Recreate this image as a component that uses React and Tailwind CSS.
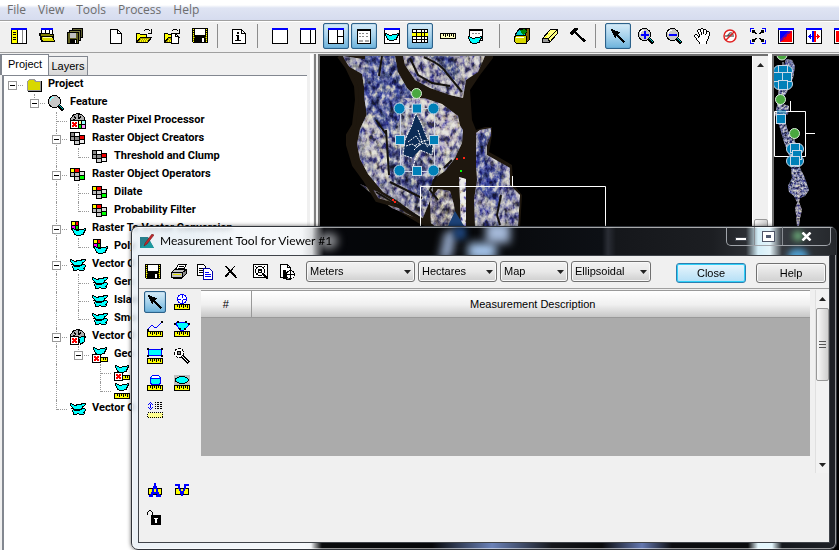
import React from "react";

const PALETTE = {
  k: "#000000", w: "#ffffff", y: "#ffff00", b: "#0000ff", c: "#00ffff", g: "#808080",
  l: "#c0c0c0", o: "#808000", r: "#ff0000", n: "#00ff00", t: "#008080", d: "#d8d800",
};

/* Bitmap drawing: one character per pixel, drawn as horizontal runs. */
function PixGroup({ rows, x: left = 0, y: top = 0 }) {
  const runs = [];
  rows.forEach((row, y) => {
    let x = 0;
    while (x < row.length) {
      const ch = row[x];
      let end = x + 1;
      while (end < row.length && row[end] === ch) end++;
      if (PALETTE[ch]) runs.push(<rect key={y + "-" + x} x={left + x} y={top + y} width={end - x} height="1" fill={PALETTE[ch]} />);
      x = end;
    }
  });
  return <g>{runs}</g>;
}

function Ico({ children, smooth }) {
  return (
    <svg width="16" height="16" viewBox="0 0 16 16" shapeRendering={smooth ? "auto" : "crispEdges"} fill="none" className="block shrink-0 overflow-visible" aria-hidden="true">
      {children}
    </svg>
  );
}

const Pix = ({ rows }) => <Ico><PixGroup rows={rows} /></Ico>;

const Win = ({ children }) => (
  <Ico>
    <rect x="0.5" y="0.5" width="15" height="15" fill="#fff" stroke="#000" />
    {children}
    <rect width="16" height="2" fill="#00f" />
  </Ico>
);

const Arrow = () => (
  <Pix rows={[
    "................", ".kk.............", ".kkkk...........", "..kkkkkk........", "..kkkkkkkk......",
    "...kkkkkk.......", "...kkkkk........", "....kkkkk.......", "....kk.kkk......", ".....k..kkk.....",
    ".........kkk....", "..........kkk...", "...........kkk..", "............kkk.", ".............k..",
  ]} />
);

const Floppy = () => (
  <Pix rows={[
    "kkkkkkkkkkkkkkkk", "kykwwwwwwwwwwkyk", "kkkwwwwwwwwwwkkk", "kykwwwwwwwwwwkyk", "kkkwwwwwwwwwwkkk",
    "kykwwwwwwwwwwkyk", "kokwwwwwwwwwwkok", "kykkkkkkkkkkkkyk", "kokkkkkkkkkkkkok", "kyokkkkkkkkkkoyk",
    "kokkkkkkkkwwkkok", "kykkkkkkkkwwkkyk", "kokkkkkkkkwwkkok", "kykkkkkkkkwwkkyk", ".kkkkkkkkkkkkkkk",
  ]} />
);

const Lens = ({ sign }) => (
  <Ico>
    <path d="M11 11l4.500 4.500" stroke="#000" strokeWidth="3" />
    <path d="M11 10l4.500 4.500" stroke="#0cc" strokeWidth="1" />
    <circle cx="6.500" cy="6.500" r="6" fill="#c8c8c8" stroke="#000" />
    <path d="M2 6c0-2 2-4 4-4" stroke={sign ? "#fff" : "#8ff"} />
    {sign && <path d={sign === "plus" ? "M3 6h8v2H3zM6 3h2v8H6z" : "M3 6h8v2H3z"} fill="#00f" />}
  </Ico>
);

const Hand = () => (
  <Pix rows={[
    ".......kk.......", "....kkkwwkkk....", "...kwwkwwkwwk...", "...kwwkwwkwwkkk.", "....kwwkwkwwkwwk",
    "....kwwkwkwwkwwk", ".kk..kwkwwwkwwwk", "kwwk.kwwwwwwwwwk", "kwwwkkwwwwwwwwk.", ".kwwkwwwwwwwwwk.",
    "..kwwwwwwwwwwwk.", "..kwwwwwwwwwwk..", "...kwwwwwwwwwk..", "....kwwwwwwwk...", ".....kwwwwwwk...", ".....kwwwwwwk...",
  ]} />
);

const FolderOpen = ({ doc }) => (
  <Ico>
    <path d="M7.500 3.500l2-2h3l2 2M15.500 1v4h-4" stroke="#000" />
    <path d="M.5 13.500v-8h3l1 1h6v3" fill="#ff0" stroke="#000" />
    <path d="M.5 14.500l4-5h11l-4 5z" fill="#a8a000" stroke="#000" />
    <path d="M5 11h8M4 12h8M4 13h7" stroke="#ff0" strokeDasharray="1 1" />
    {doc && <path d="M7.500 5.500h4l3 3v7h-7z" fill="#fff" stroke="#000" />}
    {doc && <path d="M11.500 5.500v3h3" stroke="#000" />}
  </Ico>
);

const Ruler = ({ y = 10, faded }) => (
  <>
    <rect x="0.500" y={y + 0.5} width="15" height="5" fill={faded ? "#ffff90" : "#ff0"} stroke="#000" strokeDasharray={faded ? "1 1" : undefined} />
    {!faded && <path d={`M3.500 ${y + 1}v2M5.500 ${y + 1}v3M7.500 ${y + 1}v2M9.500 ${y + 1}v3M11.500 ${y + 1}v2M13.500 ${y + 1}v3`} stroke="#000" />}
  </>
);

const Blob = ({ x = 0, y = 0 }) => (
  <PixGroup x={x} y={y} rows={["kk..........kk", "kckk...kkkkkck", "kccckkkccccckk", ".kcccccccccck.", ".kccccccccckk.", "..kcccccccck..", "..kkccccckkk..", "....kkkkk....."]} />
);

const RedX = () => (
  <PixGroup y={7} rows={["kkkkkkkkk", "kwwwwwwwk", "kwrrwrrwk", "kwrrrrrwk", "kwwrrrwwk", "kwrrrrrwk", "kwrrwrrwk", "kwwwwwwwk", "kkkkkkkkk"]} />
);

const Blocks = ({ colors }) => (
  <Ico>
    {[[1, 2], [1, 6], [5, 2], [5, 6], [5, 10], [10, 5], [10, 9]].map(([x, y], i) => (
      <rect key={i} x={x - 0.5} y={y - 0.5} width="5" height="4" fill={colors[i]} stroke="#000" />
    ))}
  </Ico>
);

const GREY_BLOCKS = ["#888", "#999", "#fff", "#888", "#ccc", "#e00", "#eee"];
const COLOR_BLOCKS = ["#ff0", "#bbb", "#f00", "#bbb", "#ccc", "#ddd", "#0f0"];

const Brain = ({ vector }) => (
  <Ico>
    <path d="M.5 8.500v-3l3-3.500 4-1.500 4 1 3 3 1 4z" fill="#b0b0b0" stroke="#000" />
    <path d="M4 3l2 3M8 1v5M11 3l-2 3M3 7l2-1" stroke="#000" />
    {vector ? <path d="M8.500 8.500l6-1v5l-4 3z" fill="#0ff" stroke="#000" /> : (
      <>
        <rect x="8.500" y="7.500" width="4" height="4" fill="#ff9" stroke="#000" />
        <rect x="11.500" y="7.500" width="4" height="4" fill="#9ff" stroke="#000" />
        <rect x="8.500" y="11.500" width="4" height="4" fill="#0f0" stroke="#000" />
        <rect x="11.500" y="11.500" width="4" height="4" fill="#f9f" stroke="#000" />
      </>
    )}
    <RedX />
  </Ico>
);

const ICONS = {
  panes: <Win><rect x="1" y="1" width="5" height="14" fill="#ff0" /><path d="M2 4.500h3M2 6.500h3M2 9.500h3M2 11.500h3" stroke="#000" /><path d="M6.500 2v13" stroke="#000" /><path d="M11.500 2v13" stroke="#888" /></Win>,
  notebook: <Ico><rect x="2.500" y="0.500" width="11" height="7" fill="#fff" stroke="#000" /><rect x="2" width="12" height="2" fill="#00f" /><path d="M6.500 2v4M10.500 2v4" stroke="#000" /><path d="M.5 5.500h10l1 1h3v7h-12z" fill="#808000" stroke="#000" /><path d="M.5 5.500l2 3h11l2 5h-12z" fill="#d8d800" stroke="#000" /><path d="M4 9.500h9" stroke="#ffffa0" /></Ico>,
  floppies: <Ico><path d="M5.500.5h10v9h-3v-6h-7z" fill="#606030" stroke="#000" /><path d="M2.500 2.500h11v10h-11z" fill="#808040" stroke="#000" /><path d="M.5 4.500h11v11h-11z" fill="#606020" stroke="#000" /><rect x="3" y="5" width="6" height="5" fill="#c0c0c0" /><rect x="3" y="11" width="7" height="4" fill="#000" /><rect x="8" y="12" width="1" height="3" fill="#fff" /></Ico>,
  doc: <Ico><path d="M2.500 1.500h7l4 4v10h-11z" fill="#fff" stroke="#000" /><path d="M9.500 1.500v4h4" stroke="#000" /></Ico>,
  open: <FolderOpen />,
  openDoc: <FolderOpen doc />,
  floppy: <Floppy />,
  info: <Ico><path d="M1.500 1.500h9l4 4v10h-13z" fill="#fff" stroke="#000" /><path d="M10.500 1.500v4h4" stroke="#000" /><path d="M6 4h2v2H6zM5 7h3v5h2v1H4v-1h2V8H5z" fill="#000" /></Ico>,
  win1: <Win />,
  win2: <Win><path d="M10.500 2v13" stroke="#000" /></Win>,
  win3: <Win><path d="M9.500 2v13M10 8.500h5" stroke="#000" /></Win>,
  dialog: <Ico><rect x="1.500" y="1.500" width="13" height="14" fill="#fff" stroke="#000" /><path d="M1 2h14" stroke="#000" strokeWidth="2" /><path d="M3 5.500h6M3 8.500h6M10 5.500h2M10 8.500h3" stroke="#888" strokeDasharray="2 1" /><path d="M3 12h4v2H3zM9 12h4v2H9z" fill="#aaa" /></Ico>,
  vectorWin: <Win><Blob x={1} y={5} /></Win>,
  grid: <Ico><rect x="0.500" y="1.500" width="15" height="13" fill="#fff" stroke="#000" /><rect x="0" y="5" width="16" height="3" fill="#ff0" /><path d="M0 4.500h16M0 8.500h16M0 11.500h16M4.500 1v14M9.500 1v14M12.500 1v14" stroke="#000" /></Ico>,
  ruler: <Ico><rect x="0.500" y="5.500" width="15" height="5" fill="#ffffc0" stroke="#000" /><path d="M3.500 6v2M5.500 6v3M7.500 6v2M9.500 6v3M11.500 6v2M13.500 6v3" stroke="#000" /></Ico>,
  vectorDlg: <Ico><rect x="1.500" y="1.500" width="13" height="11" fill="#fff" stroke="#000" /><path d="M1 2h14" stroke="#000" strokeWidth="2" /><path d="M4 5.500h8" stroke="#888" strokeDasharray="2 1" /><Blob y={8} /></Ico>,
  catalog: <Ico><path d="M4.500.5h11v11l-4 4" fill="#806000" stroke="#000" /><path d="M1 7l4-6h8l-2 7z" fill="#0cc" stroke="#000" /><path d="M6 2l5-1 2 3-4 3z" fill="#080" /><path d="M.5 8.500l2-1h9l1 1v7h-10l-2-2z" fill="#d8d800" stroke="#000" /><path d="M2 9.500h8" stroke="#fff" /></Ico>,
  eraser: <Ico><path d="M.5 10.500l8-9h7v4l-8 9h-7z" fill="#ffff80" stroke="#000" /><path d="M.5 10.500h6l1 4h-7z" fill="#999" stroke="#000" /><path d="M6.500 10.500l9-9" stroke="#000" /><path d="M3 10l7-7" stroke="#ff0" strokeDasharray="1 1" /></Ico>,
  hammer: <Pix rows={["....kkkk........", "...kkkkk........", "..kkkkk.........", ".kkkkk..........", "kkkkkkk.........", "kkkk.kkk........", ".kk...kkk.......", ".......kkk......", "........kkk.....", ".........kkk....", "..........kkkk..", "...........kkkk.", "............kkkk", ".............kk."]} />,
  arrow: <Arrow />,
  zoomIn: <Lens sign="plus" />,
  zoomOut: <Lens sign="minus" />,
  hand: <Hand />,
  noRotate: <Ico smooth><circle cx="8" cy="8" r="6" fill="#fff" stroke="#e02020" strokeWidth="1.500" /><path d="M3 8h9M6 8c0-4 5-4 5-1M8 6v2" stroke="#222" /><path d="M4 12l8-8" stroke="#e02020" strokeWidth="1.500" /></Ico>,
  fit: <Ico><path d="M.5 4V.5H4M12 .5h3.500V4M15.500 12v3.500H12M4 15.500H.5V12" stroke="#00f" /><PixGroup x={2} y={2} rows={["kkk......kkk", "kkk......kkk", "kkkk....kkkk", "...kk..kk...", "............", "............", "............", "............", "...kk..kk...", "kkkk....kkkk", "kkk......kkk", "kkk......kkk"]} /></Ico>,
  blend: <Win><rect x="2" y="3" width="12" height="11" fill="#f00" /><path d="M2 3h12L2 14z" fill="#50b" /><path d="M2 3h8l-8 8z" fill="#00f" /><path d="M4 13l9-9" stroke="#b04" strokeWidth="2" strokeDasharray="1 1" /></Win>,
  swipe: <Win><path d="M6 3h2v11H6z" fill="#00f" /><path d="M8 3h2v11H8z" fill="#f00" /><path d="M2 8.500h4M4.500 6v5M3.500 7v3" stroke="#00f" /><path d="M10 8.500h4M11.500 6v5M12.500 7v3" stroke="#f00" /></Win>,
  flicker: <Win><rect x="2" y="3" width="12" height="11" fill="#f00" /><path d="M6 4l6 4-6 4z" fill="#fff" /></Win>,
  folder: <Ico><path d="M3 14.500h12.500V4" stroke="#000" strokeWidth="1" /><path d="M1.500 4.500l2-2h5l1 2h5v9h-13z" fill="#d8d800" stroke="#999" /><path d="M2 14h13V5" stroke="#000" /></Ico>,
  feature: <Lens />,
  pixelProc: <Brain />,
  vectorProc: <Brain vector />,
  greyBlocks: <Blocks colors={GREY_BLOCKS} />,
  colorBlocks: <Blocks colors={COLOR_BLOCKS} />,
  rasterVector: <Ico><path d="M1 1h4v4H1z" fill="#ff0" /><path d="M5 1h4v4H5z" fill="#f00" /><path d="M1 5h4v4H1z" fill="#f0f" /><path d="M5 5h4v4H5z" fill="#0d0" /><path d="M1.500 0.500h7v8h-7zM1 4.500h8M5 1v8" stroke="#000" /><Blob x={2} y={7} /></Ico>,
  vectors: <Ico><PixGroup y={2} rows={["kk.........kkkkk", "kckk..kkkkkkccck", "kccckkkccccccck.", ".kcccccccccckk..", "..kccccccccck...", ".kkkccccccckkkk.", "...kkkkkkkkkccck", "..kckkkkkkccccck", "..kccccccccccck.", "...kccccccccckk.", "...kccckkccccck.", "...kkkk..kkkkk.."]} /></Ico>,
  blobX: <Ico><Blob x={1} y={0} /><path d="M9 10.500h6.500v4H9" fill="#ff0" stroke="#000" /><path d="M11.500 11v2M13.500 11v2" stroke="#000" /><RedX /></Ico>,
  blobRuler: <Ico><Blob x={1} y={0} /><Ruler /></Ico>,
  printer: <Ico><path d="M4.500 5.500l3-5h8l-3 5z" fill="#fff" stroke="#000" /><path d="M8 2.500h5M7 4.500h5" stroke="#000" /><path d="M.5 8.500l3-3h11l-2 3z" fill="#c0c0c0" stroke="#000" /><path d="M.5 8.500h11v5h-11z" fill="#c0c0c0" stroke="#000" /><path d="M11.500 13.500l4-4v-4l-4 3z" fill="#888" stroke="#000" /><path d="M2 10.500h8" stroke="#dd0" /><path d="M2 14.500h9" stroke="#000" /></Ico>,
  copy: <Ico><path d="M.5.5h6l2 2v9h-8z" fill="#fff" stroke="#000" /><path d="M2 4.500h4M2 6.500h4M2 8.500h4" stroke="#000" /><path d="M6.500 4.500h6l3 3v8h-9z" fill="#fff" stroke="#00a" /><path d="M8 8.500h4M8 10.500h6M8 12.500h6" stroke="#00f" /></Ico>,
  remove: <Pix rows={["", "", "..kk.......k....", "...kk.....k.....", "....kk...k......", ".....kk.kk......", ".....kkkk.......", "......kkk.......", ".....kkkkk......", "....kk..kkk.....", "...kkk...kkk....", "..kkk.....kkk...", "..kk.......kk...", "............kk.."]} />,
  find: <Ico><rect x="0.500" y="0.500" width="14" height="13" fill="#fff" stroke="#000" /><circle cx="7" cy="7" r="4.500" stroke="#000" /><circle cx="7" cy="7" r="2" stroke="#000" /><path d="M2 2l10 10M12 2L2 12" stroke="#000" strokeDasharray="1 1" /><path d="M10 10l5 5" stroke="#000" strokeWidth="2" /></Ico>,
  annotate: <Ico><path d="M1.500.5h7l3 3v10h-10z" fill="#fff" stroke="#000" /><path d="M8.500.5v3h3" stroke="#000" /><path d="M4 6h3v9H4z" fill="#000" /><path d="M7 8h3v7H7z" fill="#888" stroke="#000" /><circle cx="11.500" cy="10.500" r="4" fill="#fff" stroke="#000" /><path d="M7 10.500h9M11.500 6v10" stroke="#000" /></Ico>,
  point: <Ico><circle cx="8" cy="5" r="4.500" fill="#fff" stroke="#00f" /><path d="M8 0v10M3 5h10" stroke="#00f" strokeDasharray="4 2" /><Ruler /></Ico>,
  line: <Ico><PixGroup rows={["..............kk", "..............kk", ".............b..", "............b...", "....bb.....b....", "...b..b...b.....", "..b....bbb......", ".b..............", "kk..............", "kk.............."]} /><Ruler /></Ico>,
  polygon: <Ico><path d="M2 2l10-1 3 3-5 5H6L2 3z" fill="#0ff" stroke="#00f" /><path d="M0 2h2v2H0zM3 0h2v2H3zM11 0h2v2h-2zM14 2h2v2h-2zM5 7h2v2H5zM10 7h2v2h-2z" fill="#000" /><Ruler /></Ico>,
  rect: <Ico><rect x="1.500" y="1.500" width="13" height="6" fill="#0ff" stroke="#00f" /><path d="M0 0h2v2H0zM14 0h2v2h-2zM0 7h2v2H0zM14 7h2v2h-2z" fill="#000" /><Ruler /></Ico>,
  wand: <Ico><circle cx="5" cy="5" r="4.500" fill="#fff" stroke="#000" strokeDasharray="3 1" /><circle cx="5" cy="5" r="2" fill="#888" stroke="#000" /><path d="M8 8l7 7" stroke="#000" strokeWidth="3" /><path d="M8 8l6 6" stroke="#fff" /></Ico>,
  cylinder: <Ico><path d="M3.500 2.500l2-2h6l2 2v6l-2 1h-6l-2-1z" fill="#0ff" stroke="#00f" /><path d="M5 1h7v2H5z" fill="#fff" /><path d="M4 3.500h9" stroke="#00f" /><Ruler /></Ico>,
  ellipse: <Ico><path d="M0 0h16v10H0z" fill="#c0c0c0" /><ellipse cx="8" cy="5" rx="6.500" ry="3.500" fill="#0ff" stroke="#000" /><Ruler /></Ico>,
  height: <Ico><PixGroup x={1} rows={["..b....k.kk.kk", ".b.b..........", "b.b.b..k.kk.kk", "..b...........", "..b....k.kk.kk", "b.b.b.........", ".b.b...k.kk.kk", "..b..........."]} /><Ruler faded /></Ico>,
  textA: <Ico><path d="M1.500 5.500h13v6h-13z" fill="#ff0" stroke="#000" /><path d="M2 13h4M9 13h5M4 13l4-11 4 11M5 10h6" stroke="#00f" strokeWidth="2" /></Ico>,
  textV: <Ico><path d="M1.500 5.500h13v6h-13z" fill="#ff0" stroke="#000" /><path d="M1 2h5M10 2h5M4 2l4 10 4-10" stroke="#00f" strokeWidth="2" /></Ico>,
  lock: <Ico><path d="M.5 4.500v-2l2-2h1l2 2v2" stroke="#000" /><path d="M4 5h10v10H4z" fill="#000" /><path d="M7 8h4v1H7zM8 8h2v5H8z" fill="#fff" /></Ico>,
};

const TOOLBAR = [
  ["panes", "notebook", "floppies", "space", "doc", "open", "openDoc", "floppy"],
  ["info"],
  ["win1", "win2", "win3*", "dialog*", "vectorWin", "grid*", "ruler", "vectorDlg"],
  ["catalog", "eraser", "hammer"],
  ["arrow*", "zoomIn", "zoomOut", "hand", "noRotate", "fit", "blend", "swipe", "flicker"],
];

const SEPARATORS = ["", "ml-[3px] mr-[7px]", "ml-1 mr-2", "ml-[9px] mr-2", "ml-[3px] mr-2"];

const ACTIVE = "border-[#2c628b] bg-linear-to-b from-[#d5ebf8] via-[#a8d3ec] to-[#6db3dc] rounded-[2px] shadow-[inset_0_0_1px_#2c628b]";

function MainToolbar() {
  return (
    <div role="toolbar" aria-label="Main" className="flex h-8 shrink-0 items-center overflow-hidden border-t border-[#a0a0a0] bg-[#f0f0f0] pb-px pl-[5px] shadow-[inset_0_1px_0_#fff]">
      {TOOLBAR.map((group, gi) => (
        <React.Fragment key={gi}>
          {gi > 0 && <span className={"h-6 w-px shrink-0 bg-[#8c8c8c] " + SEPARATORS[gi]} />}
          {group.map((id) => {
            if (id === "space") return <span key={id} className="w-[13px] shrink-0" />;
            const on = id.endsWith("*");
            const name = on ? id.slice(0, -1) : id;
            return (
              <button key={id} type="button" aria-label={name} className={"mx-px flex h-[26px] w-[26px] shrink-0 items-center justify-center border " + (on ? ACTIVE : "border-transparent")}>
                {ICONS[name]}
              </button>
            );
          })}
        </React.Fragment>
      ))}
    </div>
  );
}

/* guides: " " none, "|" passing line, "t" branch, "L" last branch, "-" root; the flag marks an expander */
const TREE = [
  ["-", true, "folder", "Project"],
  [" L", true, "feature", "Feature"],
  ["  t", false, "pixelProc", "Raster Pixel Processor"],
  ["  t", true, "greyBlocks", "Raster Object Creators"],
  ["  |L", false, "greyBlocks", "Threshold and Clump"],
  ["  t", true, "colorBlocks", "Raster Object Operators"],
  ["  |t", false, "colorBlocks", "Dilate"],
  ["  |L", false, "colorBlocks", "Probability Filter"],
  ["  t", true, "rasterVector", "Raster To Vector Conversion"],
  ["  |L", false, "rasterVector", "Poly"],
  ["  t", true, "vectors", "Vector O"],
  ["  |t", false, "vectors", "Gen"],
  ["  |t", false, "vectors", "Islan"],
  ["  |L", false, "vectors", "Smo"],
  ["  t", true, "vectorProc", "Vector O"],
  ["  |L", true, "blobX", "Geo"],
  ["  | t", false, "blobX", ""],
  ["  | L", false, "blobRuler", ""],
  ["  L", false, "vectors", "Vector O"],
];

function Guide({ kind, box, first }) {
  const vertical = kind === "|" || kind === "t" ? "h-full border-r" : kind === "L" ? "h-[10px] border-r" : "h-full";
  const branch = kind === "t" || kind === "L" || kind === "-";
  return (
    <span className={"relative flex h-full shrink-0 " + (first ? "w-[19px]" : "w-[22px]")}>
      <span className={(first ? "w-[9px]" : "w-3") + " border-dotted border-[#999] " + vertical} />
      <span className={"h-[10px] flex-1 border-dotted border-[#999] " + (branch ? "border-b" : "")} />
      {box && (
        <span className={"absolute top-[5px] flex h-[9px] w-[9px] items-center justify-center border border-[#999] bg-white " + (first ? "left-1" : "left-[7px]")}>
          <span className="h-px w-[5px] bg-black" />
        </span>
      )}
    </span>
  );
}

function ProjectTree() {
  return (
    <ul className="ml-0.5 min-h-0 flex-1 overflow-hidden border-l-2 border-t border-[#828790] bg-white font-['Roboto',Arial,sans-serif]">
      {TREE.map(([guides, box, icon, label], i) => (
        <li key={i} className="flex h-[18px] items-center">
          {guides.split("").map((g, gi) => (
            <Guide key={gi} kind={g} first={gi === 0} box={box && gi === guides.length - 1} />
          ))}
          <span className="flex w-[25px] shrink-0 justify-start pl-[3px]">{ICONS[icon]}</span>
          <span className="mb-0.5 whitespace-nowrap text-[11px] font-bold leading-3 text-black">{label}</span>
        </li>
      ))}
    </ul>
  );
}

function NoiseDefs({ id, freq }) {
  return (
    <filter id={id} x="0" y="0" width="100%" height="100%" colorInterpolationFilters="sRGB">
      <feTurbulence type="fractalNoise" baseFrequency={freq} numOctaves="3" seed="11" result="n" />
      <feColorMatrix in="n" type="matrix" values="1.9 1.1 0 0 -1.0  1.9 1.0 0 0 -0.97  1.3 0.6 0.5 0 -0.68  0 0 0 0 1" result="c" />
      <feComposite in="c" in2="SourceAlpha" operator="in" result="t" />
      <feBlend in="t" in2="SourceGraphic" mode="hard-light" result="h" />
      <feComposite in="h" in2="SourceGraphic" operator="arithmetic" k1="0" k2="0.700" k3="0.250" k4="0" />
    </filter>
  );
}

const Handle = ({ x, y, round }) =>
  round ? <circle cx={x} cy={y} r="5.500" fill="#0080b8" stroke="#c8d8e8" /> : <rect x={x - 4.5} y={y - 4.5} width="9" height="9" fill="#0080b8" stroke="#c8d8e8" />;

function MainImage() {
  return (
    <svg viewBox="320 56 431 171" className="block h-[171px] w-[431px] shrink-0" fill="none" role="img" aria-label="Satellite image">
      <defs><NoiseDefs id="land" freq="0.2 0.14" /></defs>
      <path d="M339 56l8 11 9 19 1 14-3 25-6 10v10l6 20 11 15 12 20 10 3 13 9 20 12 10 4h90l2-33-9-11-1-19-12-7-11-6 3-17v-8h-7l-9 3-4-10-2-30 10-15 13-17V56z" fill="#1e170e" />
      <g filter="url(#land)">
        <path d="M343 56l5 10 14 8 4 25 1 15-7 15-3 15 3 15 8 15 15 18 15 9 20 15 4 4 5-12 6-15-1-13 13-9 10-13 7-15 1-13-8-12-10-7-15-5-12-1-10-7-10-18-3-16z" fill="#9599ae" />
        <path d="M365 56h30l3 16 9 16 11 10-12 6-7 16-8 18-10 2-14-24-3-20z" fill="#5463a0" />
        <path d="M384 150l18-8 20 18 12 14-8 30-24-18-18-16z" fill="#5a6592" />
        <path d="M369 112l8 14 9 12 3 44-14-13-13-25 1-20z" fill="#b8b8c0" />
        <path d="M403 56l2 9 10 15 15 8 20 7 13 3 3-18 12-8 7-16z" fill="#a9a9b8" />
        <path d="M430 56h20l10 14-3 12-18-12z" fill="#5f6c98" />
        <path d="M476 133l4-3 11-2v7l-4 10v10l23 13v17l10 10-2 31h-43l-1-26 3-20-1-20z" fill="#9498b4" />
        <path d="M478 134l11-4-5 20 2 12 16 12-4 34-18-18-4-24z" fill="#4e5da2" />
        <path d="M430 200l8-11 12 2 4 14 3 21h-26z" fill="#888690" />
        <path d="M459 177l7 2v47h-5l-1-26z" fill="#eeeef0" />
        <path d="M360 184l18 8 20 12 18 14-24-10-20-14z" fill="#807c80" />
        <path d="M404 98h20l18 6 16 12 3 14-8 20-12 10-4-20-10-20-8-8z" fill="#c4c0c6" />
      </g>
      <path d="M339 56l8 11 9 19 1 14-3 25-6 10v10l6 20 11 15 12 20 22 6 34 21" stroke="#1e170e" strokeWidth="4" />
      <path d="M410 58l8 17 14 8 18 3M424 57c10 5 18 8 24 18l14 17M386 130l3 45M376 120l10 14M390 182l32 16M501 195l-4 20 3 10M382 56l-3 20M440 168l-10 22 8 10M452 160l-8 8M376 192l20 12 24 14" stroke="#15120e" strokeWidth="2" />
      <path d="M448 226l7-15 9 15z" fill="#1c4278" />
      <path d="M416 113l6 12 5 13 6 7-1 10-12-5-8 8-9-3 2-15 7-15z" fill="#0c2c56" />
      <path d="M416 113l6 12 5 13 6 7-1 10-12-5-5 9-2 9 M412 158l-9-3 2-15 7-15 4-12M408 142l8-6 4 6 8-2M406 146l6-2 5 3 6-4 8 3M418 130l4 12-8 4M424 140l4 8M414 150l6-6" stroke="#fff" strokeDasharray="2 1" />
      <path d="M456 158h2v2h-2zM463 157h2v2h-2zM392 199h2v2h-2zM394 201h2v2h-2z" fill="#f21" />
      <path d="M460 170h2v2h-2z" fill="#0f0" />
      <rect x="400.500" y="108.500" width="34" height="63" stroke="#cdd3e4" />
      <path d="M417 95v14" stroke="#cdd3e4" />
      <Handle round x={399.5} y={108.5} /><Handle round x={433.5} y={108.5} /><Handle round x={399.5} y={170.5} /><Handle round x={433.5} y={170.5} />
      <Handle x={417} y={108.5} /><Handle x={400} y={140} /><Handle x={434} y={140} /><Handle x={417} y={171} />
      <circle cx="416.500" cy="93.500" r="5" fill="#4aa840" stroke="#e0f0e0" />
      <path d="M420.500 227v-40.500h185V227M512.500 176v10" stroke="#fff" />
    </svg>
  );
}

function Overview() {
  return (
    <svg viewBox="774 56 65 171" className="block h-[171px] w-[65px] shrink-0" fill="none" role="img" aria-label="Overview image">
      <defs><NoiseDefs id="mini" freq="0.4" /></defs>
      <g filter="url(#mini)">
        <path d="M786 59l6 1 3 6-2 12-6 14-5 8 1 4 6 2-1 8-4 2 3 12 4 10 6 6 1 8-2 8 4 8 4 8 3 8 2 6-4 6-5 2-3 4-3-6-5-4-1-6 4-8-2-20-6-16-4-14-5-14 2-8 2-20z" fill="#7d86ac" />
        <path d="M800 184l1 10-2 8 3 8-2 8-1 8h-2l-1-12-1-6 3-7-1-8 1-8z" fill="#a0a0b0" />
      </g>
      <path d="M783 62v12M780 99v14M794 133v14" stroke="#cdd3e4" />
      <Handle round x={779} y={71} /><Handle round x={787} y={71} /><Handle round x={779} y={84} /><Handle round x={787} y={84} />
      <Handle x={783} y={70} /><Handle x={778} y={77} /><Handle x={787} y={77} /><Handle x={783} y={85} />
      <path d="M774.500 111.500h31v45h-31zM790.500 101v10M806 133.500h9" stroke="#fff" />
      <Handle x={781} y={119} /><path d="M777 111h9M777 113h9" stroke="#0080b8" />
      <Handle round x={792} y={149} /><Handle round x={798} y={149} /><Handle round x={792} y={161} /><Handle round x={798} y={161} />
      <Handle x={795} y={148} /><Handle x={797} y={155} /><Handle x={795} y={161} />
      <circle cx="782" cy="55" r="5" fill="#4aa840" stroke="#e0f0e0" />
      <circle cx="780.500" cy="99.500" r="5" fill="#4aa840" stroke="#e0f0e0" />
      <circle cx="794.500" cy="133.500" r="5" fill="#4aa840" stroke="#e0f0e0" />
    </svg>
  );
}

const Tri = ({ up }) => (
  <svg width="7" height="4" viewBox="0 0 7 4" className="block" aria-hidden="true"><path d={up ? "M0 4l3.500-4L7 4z" : "M0 0l3.500 4L7 0z"} fill="#222" /></svg>
);

const DIALOG_FONT = "font-['Liberation_Sans',Arial,sans-serif] text-[11px]";

function Combo({ label, value, width }) {
  return (
    <span className={"relative flex h-[21px] shrink-0 " + width}>
      <select aria-label={label} className={"h-full w-full appearance-none rounded-[3px] border border-[#707070] bg-linear-to-b from-[#f2f2f2] via-[#e8e8e8] to-[#cfcfcf] pl-[3px] text-black shadow-[inset_0_0_0_1px_#f8f8f8] " + DIALOG_FONT} defaultValue={value}>
        <option>{value}</option>
      </select>
      <span className="pointer-events-none absolute right-1 top-[9px]"><Tri /></span>
    </span>
  );
}

const TOOLS = ["arrow", "point", "line", "polygon", "rect", "wand", "cylinder", "ellipse", "height"];

function ToolButton({ id, on }) {
  return (
    <button type="button" aria-label={id} className={"flex h-[22px] w-[22px] items-center justify-center border " + (on ? ACTIVE : "border-transparent")}>
      {ICONS[id]}
    </button>
  );
}

function MeasurementDialog() {
  return (
    <section role="dialog" aria-label="Measurement Tool" className="absolute bottom-0 left-[131px] right-[2px] top-[226px] flex flex-col overflow-hidden rounded-[7px] border border-[#30343a] bg-[linear-gradient(90deg,#e6edf4c8_0,#f3f6f9c8_179px,#0a0b0d_190px,#060709_300px,#6b82b8_360px,#16181c_420px,#090a0c_470px,#6478b0_510px,#0c0d10_540px,#0a0b0d_616px,#e4f6fc_626px,#e4f6fc_640px,#14171c_650px,#1e2126_100%)] px-[6px] pb-[6px] shadow-[inset_0_0_0_1px_#ffffff90,0_0_4px_#0009] backdrop-blur-[2px]">
      <header className="relative -mx-[6px] flex h-[28px] shrink-0 overflow-hidden bg-[linear-gradient(90deg,#eef2f630_0,#d9e8f230_60px,#fbfcfd60_110px,#f4f6f8_170px,#d8dadc_180px,#05060a_192px,#050608_300px,#0d1015_470px,#2a2d35_476px,#15171b_484px,#1c1e22_580px,#2b2e33_614px,#d4eef8_626px,#e4f4fa_638px,#35393f_650px,#25282c_100%)] pl-2 shadow-[inset_0_1px_0_#ffffffa0]">
        <span className="absolute left-[310px] top-1 h-7 w-3 -skew-x-12 bg-[#93a6c6] blur-[4px]" />
        <span className="absolute left-[322px] top-0 h-3 w-3 bg-[#1c4278] blur-[3px]" />
        <span className="absolute left-[336px] top-4 h-4 w-7 bg-[#a9c9f0] blur-[5px]" />
        <span className="absolute left-[354px] top-[-4px] h-5 w-6 bg-[#a4b8d8] blur-[4px]" />
        <span className="absolute left-[661px] top-1 h-2.5 w-2.5 rounded-full bg-[#6fb27d] blur-[3px]" />
        <span className="absolute left-[656px] top-[22px] h-4 w-5 rounded-full bg-[#4f9fd0] blur-[3px]" />
        <span className="absolute left-[186px] top-1.5 h-4 w-5 rounded-full bg-[#8a8c90] blur-[4px]" />
        <span className="relative mt-[7px] h-4 w-[14px]">
          <svg width="14" height="15" viewBox="0 0 14 15" aria-hidden="true"><path d="M0 3h8l6 11H0z" fill="#2a7f8c" /><path d="M0 14L8 4l6 10z" fill="#1c9aa0" /><path d="M4 12l1-3 7-9 2 1-7 9z" fill="#c0282c" stroke="#601010" strokeWidth="0.500" /></svg>
        </span>
        <h1 className="relative ml-1.5 mt-[7px] h-[14px] whitespace-nowrap font-['Lato','Segoe_UI',sans-serif] text-[12px] leading-[14px] text-black">Measurement Tool for Viewer #1</h1>
        <div className="relative ml-auto mr-[5px] flex h-[19px] rounded-b-[5px] border border-t-0 border-[#a0a4aa] text-white">
          <button type="button" aria-label="Minimize" className="flex w-[28px] items-center justify-center border-r border-[#888c92]"><span className="mt-1.5 h-1 w-3 border border-[#40444c] bg-white" /></button>
          <button type="button" aria-label="Maximize" className="flex w-[28px] items-center justify-center border-r border-[#888c92]"><span className="h-[9px] w-[11px] border-[3px] border-white bg-[#505a70] outline outline-1 outline-[#505668]" /></button>
          <button type="button" aria-label="Close window" className="flex w-[47px] items-center justify-center">
            <svg width="11" height="9" viewBox="0 0 11 9" aria-hidden="true"><path d="M1.500.5l8 8M9.500.5l-8 8" stroke="#fff" strokeWidth="2.500" /></svg>
          </button>
        </div>
      </header>
      <div className={"flex min-h-0 flex-1 flex-col border border-[#40444a] bg-[#f0f0f0] text-black " + DIALOG_FONT}>
        <div role="toolbar" aria-label="Measurement" className="flex h-[33px] shrink-0 items-center border-b border-[#a0a0a0] pb-px pl-px pr-[3px]">
          {["floppy", "printer", "copy", "remove", "find", "annotate"].map((id) => (
            <button key={id} type="button" aria-label={id} className={"flex h-[26px] w-[26px] shrink-0 items-center justify-center " + (id === "find" ? "ml-1" : "")}>{ICONS[id]}</button>
          ))}
          <div className="ml-[6px] flex gap-[3px]">
            <Combo label="Length units" value="Meters" width="w-[109px]" />
            <Combo label="Area units" value="Hectares" width="w-[79px]" />
            <Combo label="Coordinates" value="Map" width="w-[68px]" />
            <Combo label="Earth model" value="Ellipsoidal" width="w-[80px]" />
          </div>
          <div className="ml-auto flex gap-[10px] pt-[3px]">
            <button type="button" className="h-5 w-[70px] rounded-[3px] border border-[#2c7fb0] bg-linear-to-b from-[#e8f5fc] to-[#b4dff6] leading-4 shadow-[inset_0_0_0_1px_#30d0f8]">Close</button>
            <button type="button" className="h-5 w-[70px] rounded-[3px] border border-[#707070] bg-linear-to-b from-[#f2f2f2] to-[#d0d0d0] leading-4 shadow-[inset_0_0_0_1px_#f8f8f8]">Help</button>
          </div>
        </div>
        <div className="flex min-h-0 flex-1 pl-[5px] pt-px">
          <div className="shrink-0 pt-px">
            <div className="grid grid-cols-2 gap-[5px]">
              {TOOLS.map((id) => <ToolButton key={id} id={id} on={id === "arrow"} />)}
            </div>
            <div className="mt-[59px] grid grid-cols-2 gap-[5px]">
              <ToolButton id="textA" /><ToolButton id="textV" /><ToolButton id="lock" />
            </div>
          </div>
          <div className="mb-[86px] ml-2 flex-1 bg-[#ababab]">
            <table className="w-full table-fixed border-collapse">
              <thead>
                <tr className="h-[27px] bg-linear-to-b from-white via-[#f0f0f0] to-[#c4c4c4]">
                  <th scope="col" className="w-[50px] border-b border-r border-t border-[#999] font-normal">#</th>
                  <th scope="col" className="border-b border-t border-[#999] pl-1 font-normal">Measurement Description</th>
                </tr>
              </thead>
              <tbody />
            </table>
          </div>
          <div className="mb-[69px] ml-[5px] flex w-[14px] shrink-0 flex-col items-center border-l border-[#e0e0e0] bg-[#f2f2f2]">
            <span className="flex h-[18px] items-center"><Tri up /></span>
            <span className="flex h-[73px] w-full flex-col items-center justify-center gap-[2px] rounded-[2px] border border-[#989898] bg-linear-to-r from-[#f8f8f8] to-[#cfcfcf]">
              <i className="h-px w-[7px] bg-[#555]" /><i className="h-px w-[7px] bg-[#555]" /><i className="h-px w-[7px] bg-[#555]" />
            </span>
            <span className="mb-1.5 mt-auto"><Tri /></span>
          </div>
        </div>
      </div>
    </section>
  );
}

export default function App() {
  return (
    <div className="relative flex h-screen flex-col overflow-hidden bg-[#f0f0f0]">
      <nav className="flex h-5 shrink-0 items-center gap-3 bg-linear-to-b from-white from-25% via-[#dfe4f3] via-40% to-[#d6dcef] pl-[7px] font-['Open_Sans','Segoe_UI',sans-serif] text-[12px] leading-5 text-[#6d6d6d]">
        {["File", "View", "Tools", "Process", "Help"].map((m) => <button key={m} type="button">{m}</button>)}
      </nav>
      <MainToolbar />
      <main className="flex min-h-0 flex-1 border-t border-[#a0a0a0]">
        <aside className="flex w-[307px] shrink-0 flex-col pt-px">
          <div role="tablist" className={"flex h-[21px] shrink-0 items-end " + DIALOG_FONT}>
            <button role="tab" aria-selected="true" type="button" className="h-[21px] w-[49px] border-l-2 border-r border-t border-[#828790] bg-white pb-0.5">Project</button>
            <button role="tab" aria-selected="false" type="button" className="h-[19px] w-[39px] border-r border-t border-[#828790] bg-linear-to-b from-[#f4f4f4] to-[#d8d8d8]">Layers</button>
          </div>
          <ProjectTree />
        </aside>
        <div className="ml-[3px] mr-0.5 mt-px w-[6px] shrink-0 border-l-[3px] border-r-2 border-l-white border-r-[#808080]" />
        <div className="mt-px flex min-w-0 flex-1 border-l-2 border-t-2 border-[#707070] bg-black">
          <div className="min-w-0 flex-1 overflow-hidden"><MainImage /></div>
          <div className="flex w-4 shrink-0 flex-col items-center border-l border-white bg-[#f0f0f0]">
            <span className="flex h-[18px] items-center"><Tri up /></span>
            <span className="mt-[145px] h-10 w-[14px] rounded-[2px] border border-[#989898] bg-linear-to-r from-[#f8f8f8] to-[#cfcfcf]" />
          </div>
          <div className="-mt-0.5 w-[6px] shrink-0 border-r-2 border-r-[#707070] bg-white" />
          <div className="w-[65px] shrink-0 overflow-hidden"><Overview /></div>
        </div>
      </main>
      <MeasurementDialog />
    </div>
  );
}
